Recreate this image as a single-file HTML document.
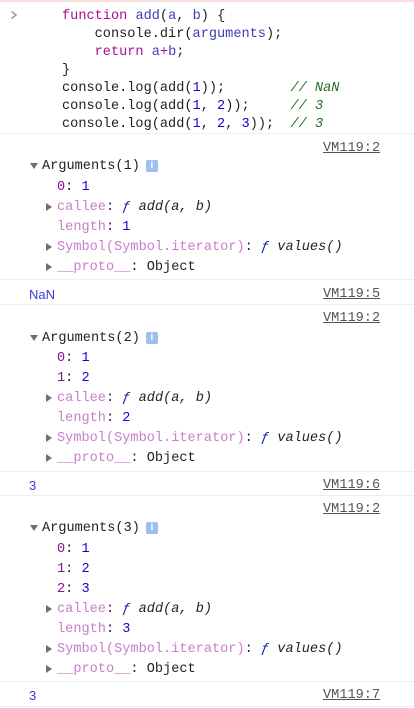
<!DOCTYPE html>
<html><head><meta charset="utf-8"><style>
html,body{margin:0;padding:0;background:#fff;width:414px;height:708px;overflow:hidden;position:relative}
.l{position:absolute;height:18px;line-height:18px;font-family:"Liberation Mono",monospace;font-size:13.6px;color:#222;white-space:pre;transform:translateY(2px)}
.kw{color:#aa0d91}.fn{color:#3c3cb8}.nm{color:#1c00cf}.cm{color:#236e25;font-style:italic}
.pk{color:#881391}.pf{color:#c77fc9}.it{font-style:italic}.f{color:#0d22aa;font-style:italic}
.vm{position:absolute;left:323px;height:18px;line-height:18px;font-family:"Liberation Mono",monospace;font-size:13.6px;color:#555;text-decoration:underline;transform:translateY(2px)}
.hr{position:absolute;left:0;width:414px;height:1px;background:#eeeeee}
.tri{position:absolute;width:0;height:0}
.tr{border-top:4px solid transparent;border-bottom:4px solid transparent;border-left:6px solid #6e6e6e}
.td{border-left:4px solid transparent;border-right:4px solid transparent;border-top:6px solid #6e6e6e}
.badge{display:inline-block;width:12px;height:12px;background:#9ebdf0;color:#fff;border-radius:2px;font:bold 10px "Liberation Sans",sans-serif;line-height:12px;text-align:center;vertical-align:1px;margin-left:6px}
.msg{position:absolute;left:29px;height:18px;line-height:18px;font-family:"Liberation Sans",sans-serif;font-size:13px;color:#3a3ad8;transform:translateY(2px)}
</style></head><body>
<div style="position:absolute;left:0;top:0;width:414px;height:2px;background:#f9dcdc"></div>
<svg style="position:absolute;left:10px;top:10px" width="8" height="10"><path d="M1.5 1.5 L6 5 L1.5 8.5" fill="none" stroke="#999" stroke-width="1.5"/></svg>
<div class="l" style="left:62px;top:6px"><span class="kw">function</span> <span class="fn">add</span>(<span class="fn">a</span>, <span class="fn">b</span>) {</div>
<div class="l" style="left:62px;top:24px">    console.dir(<span class="fn">arguments</span>);</div>
<div class="l" style="left:62px;top:42px">    <span class="kw">return</span> <span class="fn">a</span><span class="kw">+</span><span class="fn">b</span>;</div>
<div class="l" style="left:62px;top:60px">}</div>
<div class="l" style="left:62px;top:78px">console.log(add(<span class="nm">1</span>));        <span class="cm">// NaN</span></div>
<div class="l" style="left:62px;top:96px">console.log(add(<span class="nm">1</span>, <span class="nm">2</span>));     <span class="cm">// 3</span></div>
<div class="l" style="left:62px;top:114px">console.log(add(<span class="nm">1</span>, <span class="nm">2</span>, <span class="nm">3</span>));  <span class="cm">// 3</span></div>
<div class="hr" style="top:133px"></div>

<div class="vm" style="top:138px">VM119:2</div>
<div class="tri td" style="left:30px;top:163px"></div>
<div class="l" style="left:42px;top:156px">Arguments(1)<span class="badge">i</span></div>
<div class="l" style="left:57px;top:177px"><span class="pk">0</span>: <span class="nm">1</span></div>
<div class="tri tr" style="left:46px;top:203px"></div>
<div class="l" style="left:57px;top:197px"><span class="pf">callee</span>: <span class="f">ƒ</span> <span class="it">add(a, b)</span></div>
<div class="l" style="left:57px;top:217px"><span class="pf">length</span>: <span class="nm">1</span></div>
<div class="tri tr" style="left:46px;top:243px"></div>
<div class="l" style="left:57px;top:237px"><span class="pf">Symbol(Symbol.iterator)</span>: <span class="f">ƒ</span> <span class="it">values()</span></div>
<div class="tri tr" style="left:46px;top:263px"></div>
<div class="l" style="left:57px;top:257px"><span class="pf">__proto__</span>: Object</div>
<div class="hr" style="top:279px"></div>
<div class="msg" style="top:284px">NaN</div>
<div class="vm" style="top:284px">VM119:5</div>
<div class="hr" style="top:304px"></div>

<div class="vm" style="top:308px">VM119:2</div>
<div class="tri td" style="left:30px;top:335px"></div>
<div class="l" style="left:42px;top:328px">Arguments(2)<span class="badge">i</span></div>
<div class="l" style="left:57px;top:348px"><span class="pk">0</span>: <span class="nm">1</span></div>
<div class="l" style="left:57px;top:368px"><span class="pk">1</span>: <span class="nm">2</span></div>
<div class="tri tr" style="left:46px;top:394px"></div>
<div class="l" style="left:57px;top:388px"><span class="pf">callee</span>: <span class="f">ƒ</span> <span class="it">add(a, b)</span></div>
<div class="l" style="left:57px;top:408px"><span class="pf">length</span>: <span class="nm">2</span></div>
<div class="tri tr" style="left:46px;top:434px"></div>
<div class="l" style="left:57px;top:428px"><span class="pf">Symbol(Symbol.iterator)</span>: <span class="f">ƒ</span> <span class="it">values()</span></div>
<div class="tri tr" style="left:46px;top:454px"></div>
<div class="l" style="left:57px;top:448px"><span class="pf">__proto__</span>: Object</div>
<div class="hr" style="top:471px"></div>
<div class="msg" style="top:475px">3</div>
<div class="vm" style="top:475px">VM119:6</div>
<div class="hr" style="top:495px"></div>

<div class="vm" style="top:499px">VM119:2</div>
<div class="tri td" style="left:30px;top:525px"></div>
<div class="l" style="left:42px;top:518px">Arguments(3)<span class="badge">i</span></div>
<div class="l" style="left:57px;top:539px"><span class="pk">0</span>: <span class="nm">1</span></div>
<div class="l" style="left:57px;top:559px"><span class="pk">1</span>: <span class="nm">2</span></div>
<div class="l" style="left:57px;top:579px"><span class="pk">2</span>: <span class="nm">3</span></div>
<div class="tri tr" style="left:46px;top:605px"></div>
<div class="l" style="left:57px;top:599px"><span class="pf">callee</span>: <span class="f">ƒ</span> <span class="it">add(a, b)</span></div>
<div class="l" style="left:57px;top:619px"><span class="pf">length</span>: <span class="nm">3</span></div>
<div class="tri tr" style="left:46px;top:645px"></div>
<div class="l" style="left:57px;top:639px"><span class="pf">Symbol(Symbol.iterator)</span>: <span class="f">ƒ</span> <span class="it">values()</span></div>
<div class="tri tr" style="left:46px;top:665px"></div>
<div class="l" style="left:57px;top:659px"><span class="pf">__proto__</span>: Object</div>
<div class="hr" style="top:681px"></div>
<div class="msg" style="top:685px">3</div>
<div class="vm" style="top:685px">VM119:7</div>
<div class="hr" style="top:706px"></div>
</body></html>
